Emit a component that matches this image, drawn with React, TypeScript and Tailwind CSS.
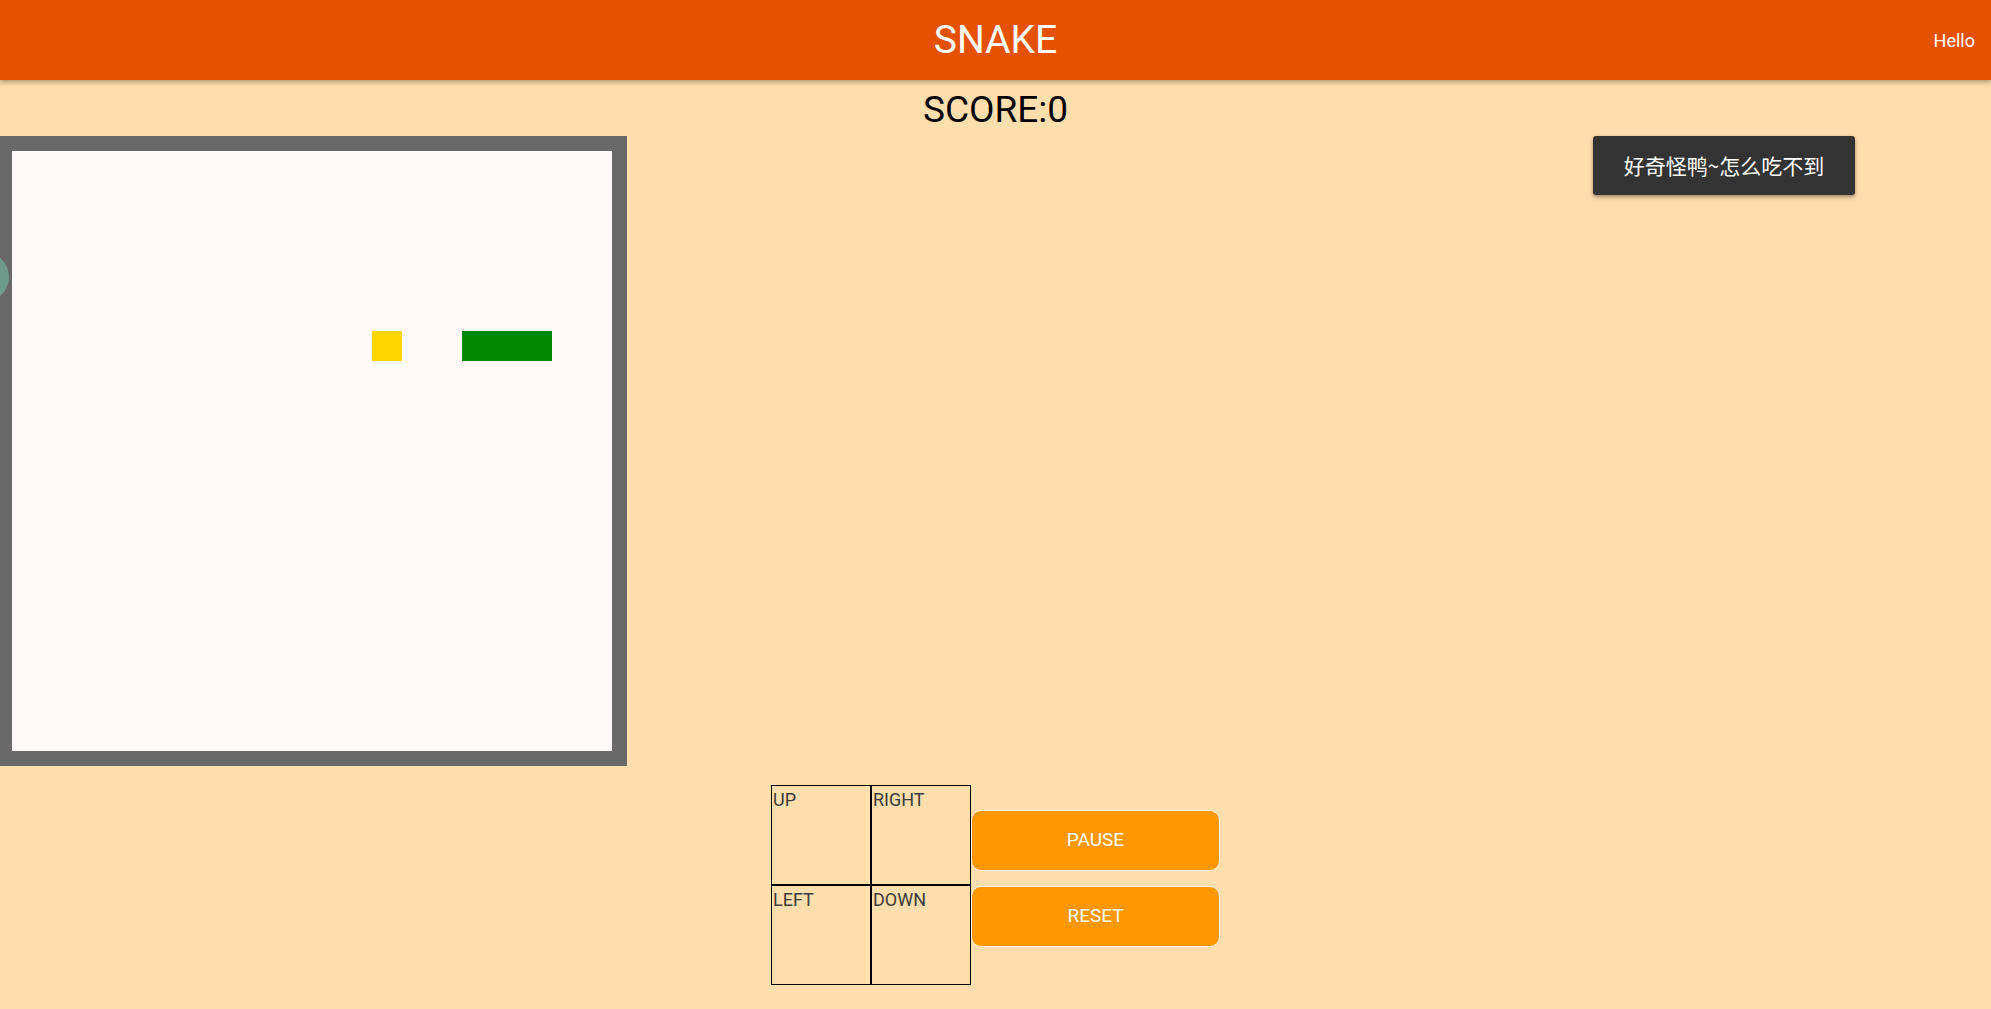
import React from 'react'

const SIZE = 20
const FOOD = { x: 12, y: 6 }
const SNAKE = [
  { x: 15, y: 6 },
  { x: 16, y: 6 },
  { x: 17, y: 6 },
]

function cellColor(x: number, y: number) {
  if (SNAKE.some((s) => s.x === x && s.y === y)) return 'bg-[#008800]'
  if (FOOD.x === x && FOOD.y === y) return 'bg-[#ffd700]'
  return ''
}

function Board() {
  const cells = []
  for (let y = 0; y < SIZE; y++) {
    for (let x = 0; x < SIZE; x++) {
      cells.push(<div key={`${x}-${y}`} className={`h-[30px] w-[30px] ${cellColor(x, y)}`} />)
    }
  }
  return (
    <div className="ml-[-3px] w-[630px] border-[15px] border-[#696969] bg-[#fffafa]">
      <div className="grid grid-cols-[repeat(20,30px)]">{cells}</div>
    </div>
  )
}

const KEYS = ['UP', 'RIGHT', 'LEFT', 'DOWN']

export default function App() {
  return (
    <div className="relative min-h-screen overflow-hidden bg-[#ffdead] font-['Roboto',sans-serif]">
      <header className="relative z-10 flex h-20 items-center justify-center bg-[#e65100] shadow-[0_2px_5px_rgba(0,0,0,0.35)]">
        <h1 className="text-[39px] leading-none text-white">SNAKE</h1>
        <span className="absolute right-4 top-[30px] text-[18px] leading-[22px] text-white">Hello</span>
      </header>

      <div className="flex h-[56px] items-center justify-center pt-[2px]">
        <p className="text-[37px] leading-none text-black">SCORE:0</p>
      </div>

      <Board />

      <div className="mt-[19px] flex justify-center">
        <div className="grid grid-cols-[100px_100px]">
          {KEYS.map((k) => (
            <div
              key={k}
              className="h-[100px] w-[100px] border border-black pl-px pt-[4px] text-[18px] leading-[20px] text-[#3b3b3b]"
            >
              {k}
            </div>
          ))}
        </div>
        <div className="mt-[25px] flex flex-col gap-[15px]">
          {['PAUSE', 'RESET'].map((b) => (
            <button
              key={b}
              className="h-[61px] w-[249px] rounded-[10px] border border-[#fff6ea] bg-[#ff9800] text-[19px] text-white"
            >
              {b}
            </button>
          ))}
        </div>
      </div>

      <div className="absolute left-[-41px] top-[252px] h-[50px] w-[50px] rounded-full bg-[#6e9a8b]" />

      <div className="absolute right-[136px] top-[136px] flex h-[59px] w-[262px] items-center justify-center rounded-[3px] bg-[#333333] text-[21px] text-white shadow-[0_2px_4px_rgba(0,0,0,0.4)] font-['Noto_Sans_CJK_SC',sans-serif]">
        好奇怪鸭~怎么吃不到
      </div>
    </div>
  )
}
